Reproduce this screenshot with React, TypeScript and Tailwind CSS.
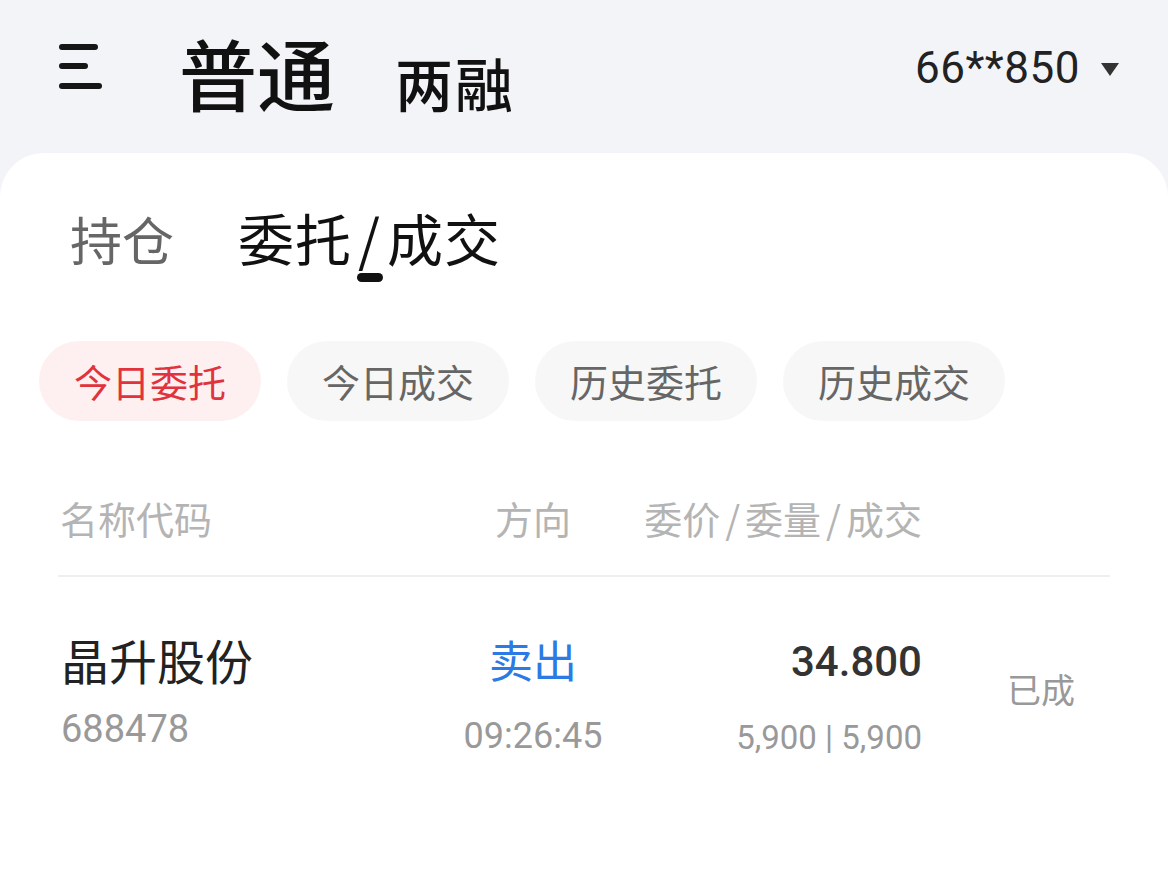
const cjk = 'font-["Noto_Sans_CJK_SC",sans-serif]';
const num = 'font-[Roboto,"Noto_Sans_CJK_SC",sans-serif]';

const chips = ['今日委托', '今日成交', '历史委托', '历史成交'];

function MenuIcon() {
  return (
    <svg width="44" height="48" viewBox="0 0 44 48" className="block">
      <g stroke="#161616" strokeWidth="6" strokeLinecap="round">
        <line x1="3" y1="6" x2="36" y2="6" />
        <line x1="3" y1="25" x2="26" y2="25" />
        <line x1="3" y1="45" x2="40" y2="45" />
      </g>
    </svg>
  );
}

export default function App() {
  return (
    <div className={`w-[1168px] h-[892px] bg-[#f3f4f8] overflow-hidden ${cjk}`}>
      {/* top bar */}
      <div className="h-[153px] flex items-start">
        <div className="ml-[59px] mt-[41px]">
          <MenuIcon />
        </div>
        <div className="ml-[76px] mt-[33px] text-[78px] leading-none font-medium text-[#111]">普通</div>
        <div className="ml-[60px] mt-[53px] text-[58px] leading-none font-medium text-[#111] tracking-[2px]">两融</div>
        <div className="ml-auto mr-[48px] mt-[46px] flex items-center">
          <span className={`${num} text-[44px] leading-none text-[#222] tracking-[0.5px]`}>66**850</span>
          <svg width="20" height="16" viewBox="0 0 20 16" className="ml-[20px] mt-[2px]">
            <polygon points="1,2 19,2 10,15" fill="#333" />
          </svg>
        </div>
      </div>

      {/* card */}
      <div className="bg-white rounded-t-[44px] h-[739px]">
        <div className="flex items-baseline pt-[56px] pl-[70px]">
          <span className="text-[52px] leading-none text-[#666]">持仓</span>
          <span className="ml-[64px] text-[56px] leading-none text-[#111] tracking-[1px]">
            委托
            <span className="relative inline-block leading-none mx-[6px]">
              /
              <span className="absolute left-[-1px] top-[64px] w-[26px] h-[9px] rounded-full bg-[#111]" />
            </span>
            成交
          </span>
        </div>

        <div className="flex gap-[26px] pl-[39px] mt-[76px]">
          {chips.map((c, i) => (
            <div
              key={c}
              className={`w-[222px] h-[80px] rounded-full flex items-center justify-center text-[38px] leading-none ${
                i === 0 ? 'bg-[#fef0f0] text-[#e0333d]' : 'bg-[#f7f7f7] text-[#666]'
              }`}
            >
              {c}
            </div>
          ))}
        </div>

        {/* table header */}
        <div className="mx-[58px] mt-[76px] h-[80px] flex items-start border-b-2 border-[#efefef] text-[38px] leading-none text-[#b4b4b4]">
          <div className="w-[408px] pl-[2px] pt-[2px]">名称代码</div>
          <div className="w-[134px] text-center pt-[2px]">方向</div>
          <div className="w-[322px] text-right pt-[2px]">
            委价<span className="mx-[5px]">/</span>委量<span className="mx-[5px]">/</span>成交
          </div>
        </div>

        {/* row */}
        <div className="mx-[58px] flex items-start">
          <div className="w-[408px] pl-[3px] pt-[58px] flex flex-col">
            <span className="text-[48px] leading-none text-[#222]">晶升股份</span>
            <span className={`${num} mt-[27px] text-[38px] leading-none text-[#999]`}>688478</span>
          </div>
          <div className="w-[134px] pt-[60px] flex flex-col items-center">
            <span className="text-[44px] leading-none text-[#2c7be5]">卖出</span>
            <span className={`${num} mt-[37px] text-[36px] leading-none text-[#999]`}>09:26:45</span>
          </div>
          <div className="w-[322px] pt-[64px] flex flex-col items-end">
            <span className={`${num} text-[42px] leading-none font-medium text-[#333]`}>34.800</span>
            <span className={`${num} mt-[38px] text-[33px] leading-none text-[#999]`}>5,900 | 5,900</span>
          </div>
          <div className="pl-[85px] pt-[95px] text-[34px] leading-none text-[#999]">已成</div>
        </div>
      </div>
    </div>
  );
}
